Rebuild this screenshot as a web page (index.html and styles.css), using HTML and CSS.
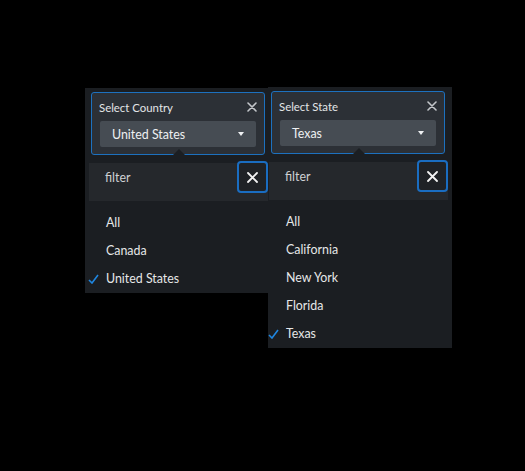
FILE: index.html
```html
<!DOCTYPE html>
<html>
<head>
<meta charset="utf-8">
<link rel="stylesheet" href="styles.css">
</head>
<body>
<div class="stage">
  <div class="panel panel--country">
    <div class="panel__inner">
      <div class="card">
        <div class="card__head">
          <span class="card__label">Select Country</span>
          <svg class="card__close" width="10" height="10" viewBox="0 0 10 10"><path d="M1 1L9 9M9 1L1 9" stroke="#c3c6ca" stroke-width="1.6" stroke-linecap="round"/></svg>
        </div>
        <div class="select">
          <span class="select__value">United States</span>
          <span class="select__caret"></span>
        </div>
      </div>
      <div class="drop">
        <span class="drop__arrow"></span>
        <div class="filter">
          <span class="filter__text">filter</span>
          <button class="filter__clear"><svg width="11" height="11" viewBox="0 0 11 11"><path d="M1 1L10 10M10 1L1 10" stroke="#f2f2f2" stroke-width="1.8" stroke-linecap="round"/></svg></button>
        </div>
        <ul class="list">
          <li class="list__item">All</li>
          <li class="list__item">Canada</li>
          <li class="list__item is-selected"><svg class="list__check" width="11" height="10" viewBox="0 0 11 10"><path d="M1 6L4 9L10 1" fill="none" stroke="#1f86e0" stroke-width="1.6"/></svg>United States</li>
        </ul>
      </div>
    </div>
  </div>
  <div class="panel panel--state">
    <div class="panel__inner">
      <div class="card">
        <div class="card__head">
          <span class="card__label">Select State</span>
          <svg class="card__close" width="10" height="10" viewBox="0 0 10 10"><path d="M1 1L9 9M9 1L1 9" stroke="#c3c6ca" stroke-width="1.6" stroke-linecap="round"/></svg>
        </div>
        <div class="select">
          <span class="select__value">Texas</span>
          <span class="select__caret"></span>
        </div>
      </div>
      <div class="drop">
        <span class="drop__arrow"></span>
        <div class="filter">
          <span class="filter__text">filter</span>
          <button class="filter__clear"><svg width="11" height="11" viewBox="0 0 11 11"><path d="M1 1L10 10M10 1L1 10" stroke="#f2f2f2" stroke-width="1.8" stroke-linecap="round"/></svg></button>
        </div>
        <ul class="list">
          <li class="list__item">All</li>
          <li class="list__item">California</li>
          <li class="list__item">New York</li>
          <li class="list__item">Florida</li>
          <li class="list__item is-selected"><svg class="list__check" width="11" height="10" viewBox="0 0 11 10"><path d="M1 6L4 9L10 1" fill="none" stroke="#1f86e0" stroke-width="1.6"/></svg>Texas</li>
        </ul>
      </div>
    </div>
  </div>
</div>
</body>
</html>
```

FILE: styles.css
```css
* { box-sizing: border-box; }
html, body { margin: 0; padding: 0; background: #000; }
body {
  width: 525px;
  height: 471px;
  font-family: "Lato", "Open Sans", sans-serif;
  color: #e6e7e8;
}
.stage {
  display: flex;
  align-items: flex-start;
  padding: 88px 0 0 85px;
}
.panel {
  position: relative;
  overflow: hidden;
}
.panel--country {
  width: 183px;
  background: #1b1e22;
}
.panel--state {
  width: 187px;
  margin-left: -3px;
  margin-top: -1px;
  background: linear-gradient(to right, transparent 3px, #1b1e22 3px);
}
.panel__inner {
  width: 187px;
  padding: 4px 7px 0 6px;
}
.card {
  position: relative;
  background: #2c3036;
  border: 1px solid #1d71bf;
  border-radius: 3px;
  padding: 4px 7px 7px;
}
.card__head {
  display: flex;
  align-items: center;
  justify-content: space-between;
  height: 20px;
}
.card__label {
  font-size: 11.4px;
  color: #e3e5e7;
}
.select {
  margin: 4px 1px 0;
  height: 26px;
  background: #464c53;
  border-radius: 2px;
  display: flex;
  align-items: center;
  justify-content: space-between;
  padding: 0 12px;
}
.select__value {
  font-size: 12.4px;
  color: #eef0f2;
}
.select__caret {
  width: 0;
  height: 0;
  border-left: 3.5px solid transparent;
  border-right: 3.5px solid transparent;
  border-top: 4px solid #eef0f2;
}
.drop {
  position: relative;
  margin: 0 -7px 0 -6px;
  padding: 8px 4px 0 4px;
}
.drop__arrow {
  position: absolute;
  top: -6px;
  left: 88px;
  width: 0;
  height: 0;
  border-left: 6px solid transparent;
  border-right: 6px solid transparent;
  border-bottom: 6px solid #1b1e22;
}
.filter {
  position: relative;
  height: 38px;
  background: #25282c;
  padding: 1px 0 0 16px;
}
.filter__text {
  display: block;
  line-height: 28px;
  font-size: 12.4px;
  color: #cfd1d3;
}
.filter__clear {
  position: absolute;
  top: -2px;
  right: 0;
  width: 31px;
  height: 32px;
  margin: 0;
  padding: 0;
  border: 2px solid #1a6dc1;
  border-radius: 4px;
  background: #1f2226;
  display: flex;
  align-items: center;
  justify-content: center;
}
.list {
  list-style: none;
  margin: 0 0 0 -4px;
  padding: 8px 0 0;
}
.list__item {
  position: relative;
  height: 28px;
  line-height: 28px;
  padding-left: 21px;
  font-size: 12.4px;
  color: #e6e7e8;
}
.list__check {
  position: absolute;
  left: 3px;
  top: 9px;
}
```
